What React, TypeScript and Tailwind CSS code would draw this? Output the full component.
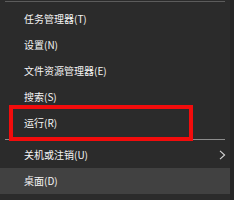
const items = [
  { label: '任务管理器(T)' },
  { label: '设置(N)' },
  { label: '文件资源管理器(E)' },
  { label: '搜索(S)' },
  { label: '运行(R)' },
]

function Row({ label, active, sub }: { label: string; active?: boolean; sub?: boolean }) {
  return (
    <div className={`flex h-[26px] items-center justify-between pl-[24px] pr-[4px] ${active ? 'bg-[#414141]' : ''}`}>
      <span className="text-[10px] leading-none text-[#f5f5f5]">{label}</span>
      {sub && (
        <svg width="7" height="10" viewBox="0 0 7 10" className="text-[#d6d6d6]">
          <path d="M1 0.8 L5.6 5 L1 9.2" fill="none" stroke="currentColor" strokeWidth="1.1" />
        </svg>
      )}
    </div>
  )
}

export default function App() {
  return (
    <div
      className="relative flex h-[200px] w-[234px] bg-[#262626]"
      style={{ fontFamily: '"Noto Sans CJK SC", "Noto Sans", sans-serif' }}
    >
      <div className="flex w-[230px] flex-col bg-[#2b2b2b]">
        <div className="px-[5px] pt-[1px]">
          <div className="h-[1px] bg-[#5c5c5c]" />
        </div>
        <div className="h-[4px]" />
        {items.map(it => (
          <Row key={it.label} label={it.label} />
        ))}
        <div className="flex h-[6px] items-center px-[5px]">
          <div className="h-[1px] w-full bg-[#8c8c8c]" />
        </div>
        <Row label="关机或注销(U)" sub />
        <Row label="桌面(D)" active />
      </div>
      <div className="absolute left-[9px] top-[105px] h-[36px] w-[184px] border-[4px] border-[#f20c0c]" />
    </div>
  )
}
